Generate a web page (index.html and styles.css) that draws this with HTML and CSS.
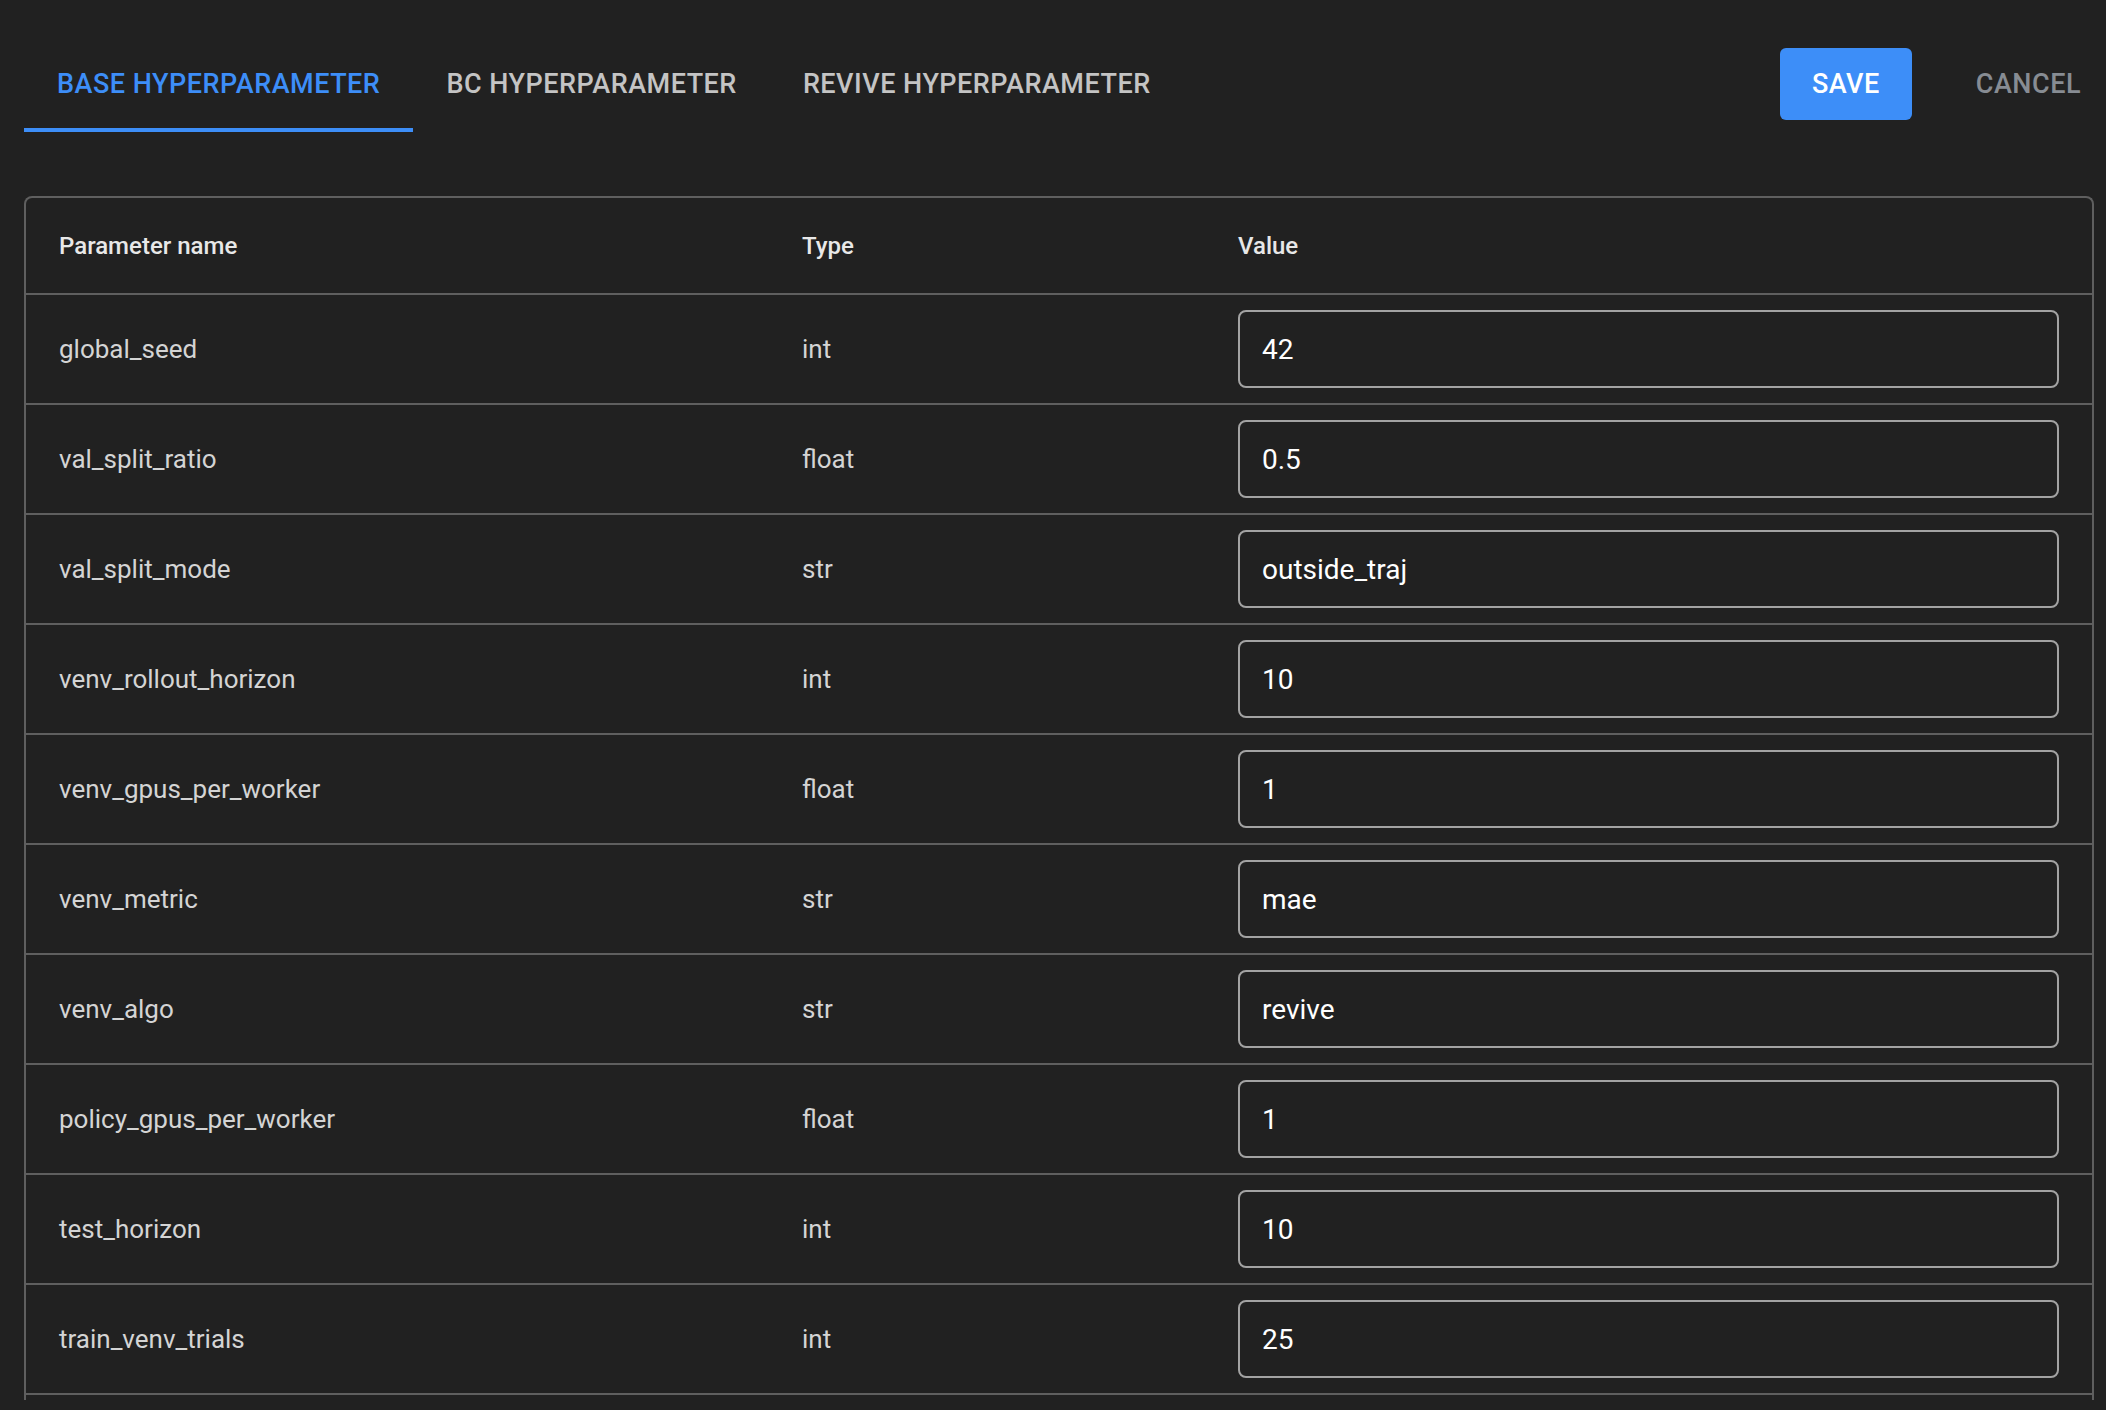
FILE: index.html
```html
<!DOCTYPE html>
<html lang="en">
<head>
<meta charset="utf-8">
<title>Hyperparameters</title>
<link rel="stylesheet" href="styles.css">
</head>
<body>
<div class="page">
  <header class="topbar">
    <nav class="tabs">
      <button class="tab active">BASE HYPERPARAMETER</button>
      <button class="tab">BC HYPERPARAMETER</button>
      <button class="tab">REVIVE HYPERPARAMETER</button>
    </nav>
    <div class="actions">
      <button class="btn-save">SAVE</button>
      <button class="btn-cancel">CANCEL</button>
    </div>
  </header>

  <div class="table-wrap">
    <table class="params">
      <colgroup>
        <col class="c-name">
        <col class="c-type">
        <col class="c-value">
      </colgroup>
      <thead>
        <tr><th>Parameter name</th><th>Type</th><th>Value</th></tr>
      </thead>
      <tbody>
        <tr><td>global_seed</td><td>int</td><td><input class="field" value="42"></td></tr>
        <tr><td>val_split_ratio</td><td>float</td><td><input class="field" value="0.5"></td></tr>
        <tr><td>val_split_mode</td><td>str</td><td><input class="field" value="outside_traj"></td></tr>
        <tr><td>venv_rollout_horizon</td><td>int</td><td><input class="field" value="10"></td></tr>
        <tr><td>venv_gpus_per_worker</td><td>float</td><td><input class="field" value="1"></td></tr>
        <tr><td>venv_metric</td><td>str</td><td><input class="field" value="mae"></td></tr>
        <tr><td>venv_algo</td><td>str</td><td><input class="field" value="revive"></td></tr>
        <tr><td>policy_gpus_per_worker</td><td>float</td><td><input class="field" value="1"></td></tr>
        <tr><td>test_horizon</td><td>int</td><td><input class="field" value="10"></td></tr>
        <tr><td>train_venv_trials</td><td>int</td><td><input class="field" value="25"></td></tr>
      </tbody>
    </table>
  </div>
</div>
</body>
</html>
```

FILE: styles.css
```css
* { box-sizing: border-box; }
html, body {
  margin: 0;
  padding: 0;
  background: #212121;
  height: 100%;
  overflow: hidden;
}
body {
  font-family: Roboto, "Liberation Sans", Arial, sans-serif;
  color: #d6d6d6;
}
.page {
  padding: 0 12px 0 24px;
}
.topbar {
  display: flex;
  align-items: flex-start;
  padding-top: 40px;
  height: 196px;
}
.tabs {
  display: flex;
}
.tab {
  background: none;
  border: none;
  border-bottom: 4px solid transparent;
  height: 92px;
  padding: 0 33px;
  font-family: inherit;
  font-size: 27px;
  font-weight: 500;
  letter-spacing: 0.5px;
  color: #c4c4c4;
  cursor: pointer;
}
.tab.active {
  color: #3d8ef8;
  border-bottom-color: #3d8ef8;
}
.actions {
  margin-left: auto;
  margin-right: 13px;
  display: flex;
  align-items: center;
  gap: 64px;
  padding-top: 8px;
}
.btn-save {
  width: 132px;
  height: 72px;
  border: none;
  border-radius: 6px;
  background: #3d8ef8;
  color: #fff;
  font-family: inherit;
  font-size: 27px;
  font-weight: 500;
  letter-spacing: 0.5px;
  cursor: pointer;
}
.btn-cancel {
  background: none;
  border: none;
  padding: 0;
  color: #878c93;
  font-family: inherit;
  font-size: 27px;
  font-weight: 500;
  letter-spacing: 0.5px;
  cursor: pointer;
}
.table-wrap {
  border: 2px solid #5f5f5f;
  border-bottom: none;
  border-radius: 8px 8px 0 0;
  height: 1204px;
  overflow: hidden;
}
.params {
  width: 100%;
  border-collapse: collapse;
  table-layout: fixed;
}
.c-name { width: 743px; }
.c-type { width: 436px; }
.params th {
  height: 96px;
  text-align: left;
  font-size: 24px;
  font-weight: 500;
  color: #e8e8e8;
  padding: 0 0 0 33px;
  border-bottom: 2px solid #5f5f5f;
}
.params td {
  height: 110px;
  font-size: 26px;
  color: #d4d4d4;
  padding: 0 0 0 33px;
  border-bottom: 2px solid #5f5f5f;
  vertical-align: middle;
}
.params td:last-child {
  padding-right: 33px;
}
.field {
  display: block;
  width: 100%;
  height: 78px;
  background: transparent;
  border: 2px solid #a3a3a3;
  border-radius: 8px;
  padding: 0 22px;
  font-family: inherit;
  font-size: 28px;
  color: #ffffff;
  outline: none;
}
```
